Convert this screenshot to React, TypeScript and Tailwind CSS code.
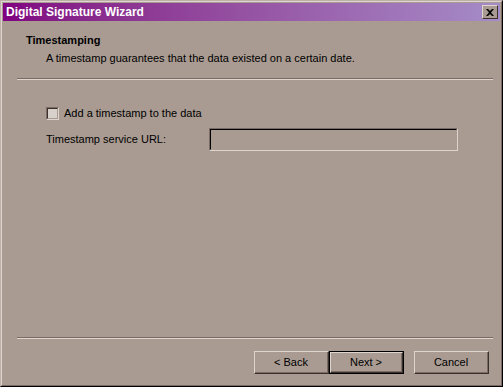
import React from 'react'

function Separator() {
  return (
    <div className="mx-[14px] w-[476px]">
      <div className="h-px bg-[#7c6b65]" />
      <div className="h-px bg-[#ded5ce]" />
    </div>
  )
}

interface ButtonProps {
  label: string
  isDefault?: boolean
}

function WizardButton({ label, isDefault }: ButtonProps) {
  const inner = (
    <div className="flex h-full w-full items-center justify-center border-t border-l border-t-[#ded5ce] border-l-[#ded5ce] border-r border-b border-r-[#3a302c] border-b-[#3a302c]">
      <div className="flex h-full w-full items-center justify-center border-r border-b border-r-[#7c6b65] border-b-[#7c6b65]">
        {label}
      </div>
    </div>
  )
  if (isDefault) {
    return <div className="h-[23px] w-[75px] border border-black">{inner}</div>
  }
  return <div className="h-[23px] w-[75px]">{inner}</div>
}

export default function App() {
  return (
    <div
      className="h-[387px] w-[503px] border border-t-[#bcb0a8] border-l-[#bcb0a8] border-r-black border-b-black bg-[#a99b92] text-[11px] text-black"
      style={{ fontFamily: '"Liberation Sans", Arial, sans-serif' }}
    >
      <div className="flex h-full flex-col border border-t-[#ded5ce] border-l-[#ded5ce] border-r-[#7c6b65] border-b-[#7c6b65] p-px">
        <div className="flex h-[18px] items-center justify-between bg-gradient-to-r from-[#800080] to-[#a58cc8] pl-[3px] pr-[2px]">
          <span className="text-[12px] font-bold text-white">Digital Signature Wizard</span>
          <div className="flex h-[14px] w-[16px] items-center justify-center border-t border-l border-t-[#ded5ce] border-l-[#ded5ce] border-r border-b border-r-[#3a302c] border-b-[#3a302c] bg-[#a99b92]">
            <svg width="8" height="7" viewBox="0 0 8 7" className="block">
              <path d="M0 0h2l2 2 2-2h2L5 3.5 8 7H6L4 5 2 7H0l3-3.5z" fill="black" />
            </svg>
          </div>
        </div>

        <div className="flex-1">
          <div className="pl-[23px] pt-[12px] leading-[14px]">
            <div className="font-bold">Timestamping</div>
            <div className="mt-[4px] pl-[20px]">
              A timestamp guarantees that the data existed on a certain date.
            </div>
          </div>
          <div className="mt-[13px]">
            <Separator />
          </div>

          <div className="pl-[43px] pt-[25px]">
            <div className="flex items-center gap-[5px]">
              <div className="h-[13px] w-[13px] border border-t-[#7c6b65] border-l-[#7c6b65] border-r-[#ded5ce] border-b-[#ded5ce]">
                <div className="h-full w-full border border-t-[#3a302c] border-l-[#3a302c] border-r-[#a99b92] border-b-[#a99b92] bg-[#d8d0ca]" />
              </div>
              <span>Add a timestamp to the data</span>
            </div>
            <div className="mt-[6px] flex items-center">
              <span className="w-[163px]">Timestamp service URL:</span>
              <div className="h-[23px] w-[249px] border border-t-[#7c6b65] border-l-[#7c6b65] border-r-[#ded5ce] border-b-[#ded5ce]">
                <div className="h-full w-full border border-t-black border-l-black border-r-[#a99b92] border-b-[#a99b92]" />
              </div>
            </div>
          </div>
        </div>

        <Separator />
        <div className="flex justify-end pr-[11px] pt-[12px] pb-[10px]">
          <WizardButton label="< Back" />
          <WizardButton label="Next >" isDefault />
          <div className="w-[10px]" />
          <WizardButton label="Cancel" />
        </div>
      </div>
    </div>
  )
}
